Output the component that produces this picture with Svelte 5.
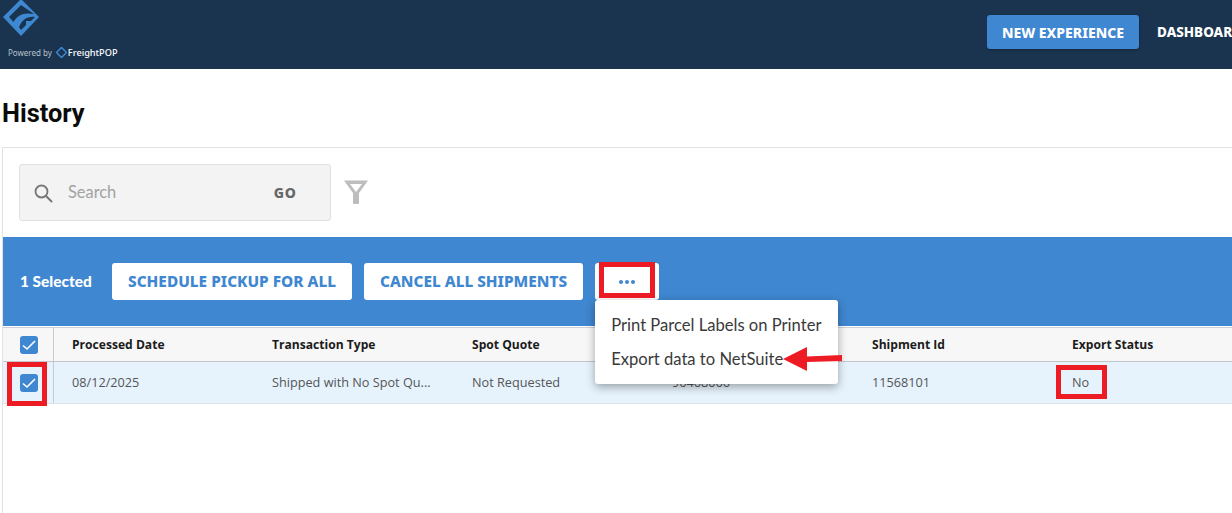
<script>
    const columns = ["Processed Date", "Transaction Type", "Spot Quote", "", "Shipment Id", "Export Status"];
    const cells = ["08/12/2025", "Shipped with No Spot Qu...", "Not Requested", "96468066", "11568101", "No"];
</script>

<header class="topbar">
    <div class="brand">
        <svg class="logo" viewBox="0 0 40 37" width="40" height="37" aria-hidden="true">
            <path d="M21 -1 L39 17 L21 36 L3 17 Z M21 5 L9 17 L13.5 22 C17 15 24 12 34 14 Z M35 17 C27 16 22 20 19 27 L21 30 L26 25 L26 21 L31 21 Z" fill="#3d88d0" fill-rule="evenodd" />
        </svg>
        <div class="powered">
            <span>Powered by</span>
            <svg viewBox="0 0 12 12" width="11" height="11" aria-hidden="true">
                <path d="M6 0.5 L11.5 6 L6 11.5 L0.5 6 Z" fill="none" stroke="#3d88d0" stroke-width="1.6" />
            </svg>
            <span class="pop">FreightPOP</span>
        </div>
    </div>
    <div class="nav">
        <button class="new-exp">NEW EXPERIENCE</button>
        <span class="nav-link">DASHBOARD</span>
    </div>
</header>

<main>
    <h1>History</h1>
    <section class="card">
        <div class="search-row">
            <div class="search">
                <svg viewBox="0 0 20 20" width="20" height="20" aria-hidden="true">
                    <circle cx="8.5" cy="8.5" r="6" fill="none" stroke="#777" stroke-width="1.8" />
                    <path d="M13 13 L18.5 18.5" stroke="#777" stroke-width="2" stroke-linecap="round" />
                </svg>
                <span class="placeholder">Search</span>
                <span class="go">GO</span>
            </div>
            <svg class="filter" viewBox="0 0 26 26" width="26" height="26" aria-hidden="true">
                <path d="M1 1.5 H25 L16 14 V24 Q16 25 15 25 H11 Q10 25 10 24 V14 Z M7 5 L13 13 L19 5 Z" fill="#bdbdbd" fill-rule="evenodd" />
            </svg>
        </div>

        <div class="bulk">
            <span class="count">1 Selected</span>
            <button class="bulk-btn">SCHEDULE PICKUP FOR ALL</button>
            <button class="bulk-btn">CANCEL ALL SHIPMENTS</button>
            <div class="more-wrap">
                <button class="bulk-btn more">
                    <svg viewBox="0 0 16 4" width="16" height="4" aria-hidden="true">
                        <circle cx="2" cy="2" r="2" fill="#3f87d0" /><circle cx="8" cy="2" r="2" fill="#3f87d0" /><circle cx="14" cy="2" r="2" fill="#3f87d0" />
                    </svg>
                </button>
                <div class="mark mark-more"></div>
                <div class="menu">
                    <div>Print Parcel Labels on Printer</div>
                    <div>Export data to NetSuite</div>
                    <svg class="arrow" viewBox="0 0 59 24" width="59" height="24" aria-hidden="true">
                        <path d="M0 12 L24 0 L24 9.5 L59 8 L59 14 L24 15 L24 24 Z" fill="#ed1c24" />
                    </svg>
                </div>
            </div>
        </div>

        <div class="thead grid-row">
            <div class="check-cell"><span class="check">
                <svg viewBox="0 0 18 18" width="18" height="18" aria-hidden="true"><path d="M3 9.5 L7 13 L15 5" fill="none" stroke="#fff" stroke-width="1.6" /></svg>
            </span></div>
            {#each columns as column}
                <div class="cell">{column}</div>
            {/each}
        </div>
        <div class="tbody grid-row">
            <div class="check-cell"><span class="check">
                <svg viewBox="0 0 18 18" width="18" height="18" aria-hidden="true"><path d="M3 9.5 L7 13 L15 5" fill="none" stroke="#fff" stroke-width="1.6" /></svg>
            </span><div class="mark mark-check"></div></div>
            {#each cells as value, i}
                <div class="cell" class:status={i === 5}>
                    {value}
                    {#if i === 5}<div class="mark mark-no"></div>{/if}
                </div>
            {/each}
        </div>
    </section>
</main>

<style>
    :global(body) {
        margin: 0;
        overflow: hidden;
        background: #fff;
        font-family: "Open Sans", sans-serif;
    }

    button {
        border: none;
        cursor: pointer;
        font-family: "Noto Sans", sans-serif;
    }

    /* header */
    .topbar {
        height: 69px;
        background: #1a3450;
        display: flex;
        justify-content: space-between;
        overflow: hidden;
    }

    .brand {
        display: flex;
        flex-direction: column;
    }

    .logo {
        display: block;
        height: 37px;
    }

    .powered {
        display: flex;
        align-items: center;
        gap: 3px;
        margin: 9px 0 0 8px;
        font-size: 8px;
        color: #b9c3cd;
        font-family: "Noto Sans", sans-serif;
    }

    .powered svg {
        margin-left: 1px;
    }

    .pop {
        color: #fff;
        font-size: 9.2px;
        font-weight: 500;
        margin-left: -2px;
    }

    .nav {
        display: flex;
        align-items: flex-start;
        width: 245px;
        flex: none;
        white-space: nowrap;
        padding-top: 15px;
        overflow: hidden;
    }

    .new-exp {
        width: 152px;
        height: 34px;
        flex: none;
        background: #3f87d0;
        color: #fff;
        font-weight: 800;
        font-size: 14px;
        border-radius: 3px;
        box-shadow: 0 1px 3px rgba(0, 0, 0, 0.3);
        padding: 0;
    }

    .nav-link {
        margin-left: 18px;
        line-height: 34px;
        color: #fff;
        font-weight: 800;
        font-size: 13.5px;
        font-family: "Noto Sans", sans-serif;
    }

    /* page */
    main {
        padding-left: 2px;
    }

    h1 {
        margin: 0;
        padding-top: 28px;
        height: 50px;
        font-size: 25.4px;
        line-height: 32px;
        font-weight: 700;
        color: #0b0b0b;
        font-family: "Roboto", sans-serif;
    }

    .card {
        border-top: 1px solid #e2e2e2;
        border-left: 1px solid #e2e2e2;
        height: 366px;
    }

    .search-row {
        display: flex;
        align-items: center;
        gap: 12px;
        padding: 16px 0;
    }

    .search {
        margin-left: 16px;
        width: 310px;
        height: 55px;
        box-sizing: content-box;
        background: #f3f3f3;
        border: 1px solid #e0e0e0;
        border-radius: 3px;
        display: flex;
        align-items: center;
    }

    .search svg {
        margin-left: 13px;
    }

    .placeholder {
        margin-left: 15px;
        padding-bottom: 3px;
        font-size: 16.4px;
        color: #a2a2a2;
        font-family: "Lato", sans-serif;
    }

    .go {
        margin-left: auto;
        margin-right: 33px;
        font-family: "Noto Sans", sans-serif;
        font-weight: 800;
        font-size: 14px;
        letter-spacing: 1px;
        color: #666;
    }

    .filter {
        margin-top: -2px;
    }

    /* blue selection bar */
    .bulk {
        height: 89px;
        box-sizing: border-box;
        background: #3f87d0;
        display: flex;
        align-items: flex-start;
        padding: 26px 0 0 17px;
        gap: 12px;
    }

    .count {
        color: #fff;
        font-weight: 900;
        font-size: 15.4px;
        line-height: 37px;
        width: 76px;
        flex: none;
        white-space: nowrap;
        margin-right: 4px;
        font-family: "Lato", sans-serif;
    }

    .bulk-btn {
        height: 37px;
        background: #fff;
        color: #3f87d0;
        font-weight: 800;
        font-size: 15.4px;
        border-radius: 3px;
        padding: 0 16px;
        white-space: nowrap;
    }

    .more-wrap {
        position: relative;
    }

    .more {
        width: 64px;
        padding: 0;
        display: flex;
        align-items: center;
        justify-content: center;
    }

    .menu {
        position: absolute;
        z-index: 3;
        top: 37px;
        left: 0;
        width: 243px;
        height: 84px;
        box-sizing: border-box;
        padding: 8px 0 0 16px;
        background: #fff;
        border-radius: 3px;
        box-shadow: 0 3px 10px rgba(0, 0, 0, 0.35);
        font-family: "Lato", sans-serif;
        font-size: 16.6px;
        line-height: 34px;
        color: #3a3a3a;
        white-space: nowrap;
    }

    .arrow {
        position: absolute;
        left: 188px;
        top: 47px;
    }

    /* table */
    .grid-row {
        display: grid;
        grid-template-columns: 51px 200px 200px 200px 200px 200px 200px;
        align-items: center;
        font-size: 12.7px;
    }

    .thead {
        margin-top: 1px;
        height: 35px;
        background: #f7f7f7;
        border-top: 1px solid #d0d0d8;
        border-bottom: 1px solid #c4c4cc;
        box-sizing: border-box;
        font-weight: 700;
        font-size: 12.1px;
        color: #1b1b1b;
    }

    .tbody {
        height: 42px;
        background: #e6f3fd;
        border-bottom: 1px solid #dde3ea;
        box-sizing: border-box;
        color: #555;
    }

    .check-cell {
        position: relative;
        align-self: stretch;
        display: flex;
        align-items: center;
        justify-content: center;
        padding-left: 2px;
        border-right: 1px solid #c9c9d0;
    }

    .check {
        width: 18px;
        height: 18px;
        border-radius: 3px;
        background: #3f87d0;
        display: block;
    }

    .check svg {
        display: block;
    }

    .cell {
        padding-left: 18px;
        padding-bottom: 1px;
        white-space: nowrap;
        position: relative;
    }

    /* red screenshot annotations */
    .mark {
        position: absolute;
        border: 5px solid #ed1c24;
        box-sizing: border-box;
        z-index: 4;
    }

    .mark-more {
        left: 4px;
        top: -1px;
        width: 56px;
        height: 36px;
    }

    .mark-check {
        left: 4px;
        top: 0;
        width: 40px;
        height: 44px;
    }

    .mark-no {
        left: 2px;
        top: -8px;
        width: 51px;
        height: 34px;
    }
</style>
